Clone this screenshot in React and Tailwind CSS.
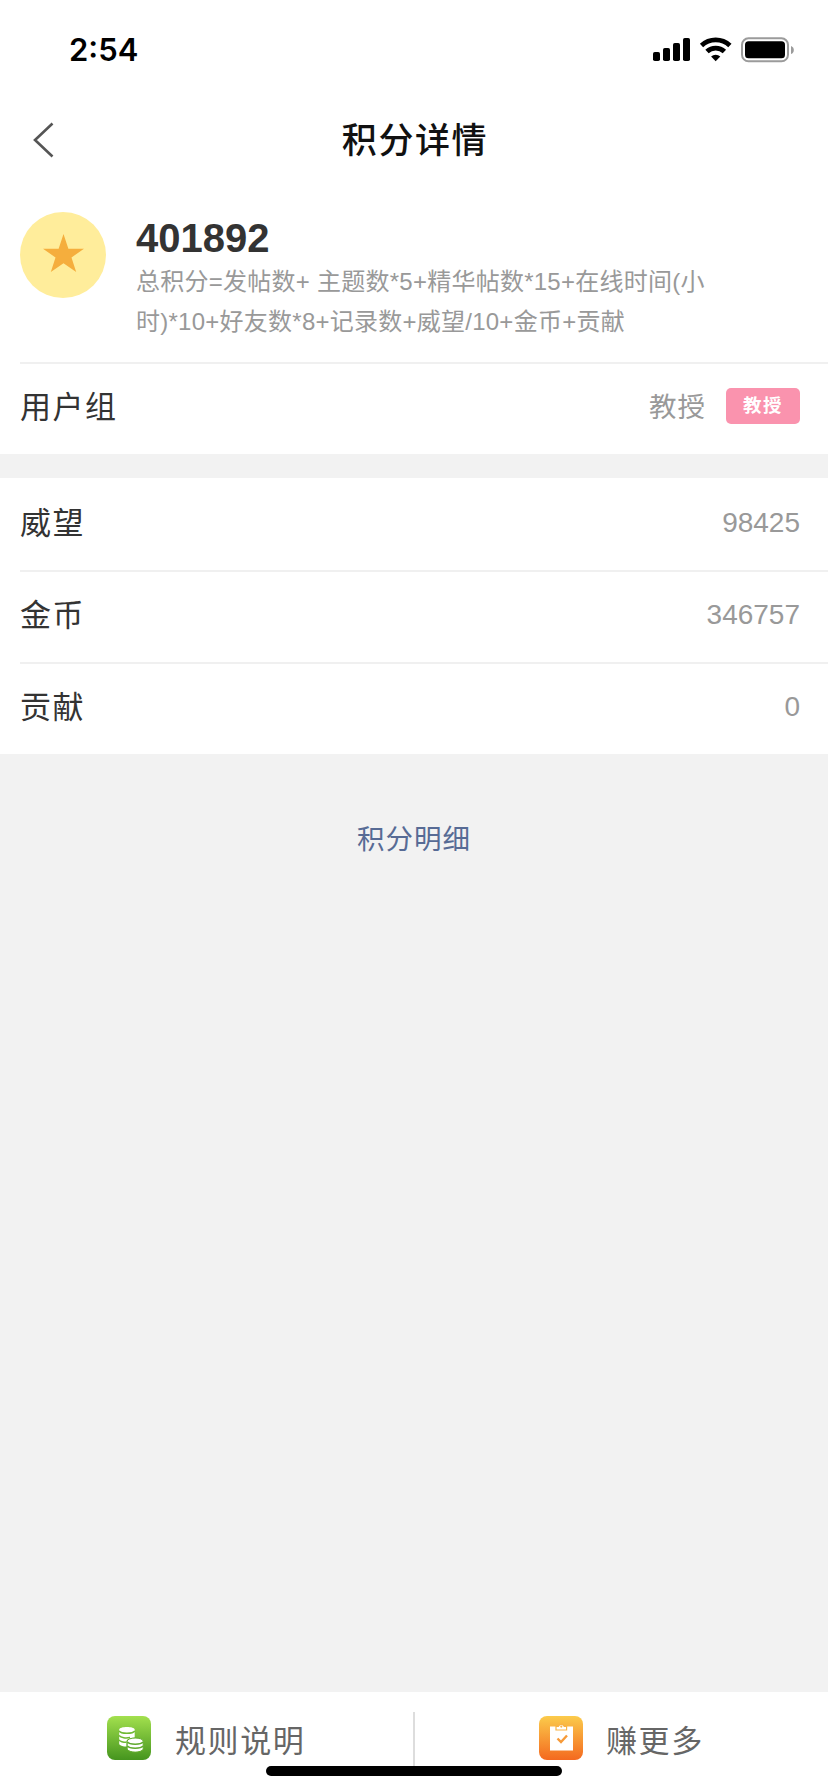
import React from "react";

const stats = [
  { label: "威望", value: "98425" },
  { label: "金币", value: "346757" },
  { label: "贡献", value: "0" },
];

const StatusBar = () => (
  <div className="flex h-[88px] items-start justify-between pt-[37px] pr-[34px] pl-[69px]">
    <span className="font-[Inter] text-[31px] leading-[26px] font-semibold text-black">
      2:54
    </span>
    <svg width="142" height="26" viewBox="0 0 142 26">
      {/* Signal */}
      <rect x="1" y="15" width="7" height="9" rx="1.8" />
      <rect x="11" y="11" width="7" height="13" rx="1.8" />
      <rect x="21" y="6" width="7" height="18" rx="1.8" />
      <rect x="31" y="1" width="7" height="23" rx="1.8" />
      {/* Wifi */}
      <g fill="none" stroke="#000" strokeWidth="4.8">
        <path d="M49.5 8.4a21 21 0 0 1 28.4 0" />
        <path d="M55 14.6a12.6 12.6 0 0 1 17.4 0" />
      </g>
      <path d="M63.7 24.3l-4.6-4.7a6.6 6.6 0 0 1 9.2 0z" />
      {/* Battery */}
      <rect
        x="90"
        y="1.3"
        width="46"
        height="23"
        rx="6.5"
        fill="none"
        stroke="#9b9b9b"
        strokeWidth="2"
      />
      <rect x="93" y="4.3" width="40" height="17" rx="3.5" />
      <path d="M139 9q2.8 1 2.8 4t-2.8 4z" fill="#9b9b9b" />
    </svg>
  </div>
);

const CoinsIcon = () => (
  <svg className="size-11" viewBox="0 0 44 44">
    <defs>
      <linearGradient id="green" x1="0" y1="0" x2="0" y2="1">
        <stop offset="0" stopColor="#a3e04e" />
        <stop offset="1" stopColor="#45951e" />
      </linearGradient>
    </defs>
    <rect width="44" height="44" rx="8" fill="url(#green)" />
    <path
      d="M12.2 13.5c0-3.5 15.500-3.500 15.500 0v8c-4.500.3-8 1.600-8.200 3.800v5.200c-3.200 0-6-.8-7.300-2.300z"
      fill="#fff"
    />
    <g fill="none" stroke="#6fb933" strokeWidth="1.4">
      <path d="M12 15c2 3 13.800 3 15.800 0" />
      <path d="M12 19.5c2 2.400 7 3 11 2" />
      <path d="M12 24c1.600 1.800 4.600 2.300 7.400 2.300" />
    </g>
    <path
      d="M20.2 25.200c0-4.200 16-4.200 16 0v7.900c-1.500 4-14.500 4-16 0z"
      fill="#fff"
      stroke="#62ad2d"
      strokeWidth="1"
    />
    <g fill="none" stroke="#5fa92c" strokeWidth="1.4">
      <path d="M20.4 26c2 2.900 13.600 2.900 15.600 0" />
      <path d="M20.4 30c2 2.900 13.600 2.900 15.600 0" />
    </g>
  </svg>
);

const TaskIcon = () => (
  <svg className="size-11" viewBox="0 0 44 44">
    <defs>
      <linearGradient id="orange" x1="0" y1="0" x2="0" y2="1">
        <stop offset="0" stopColor="#fbcb4b" />
        <stop offset="1" stopColor="#f4691f" />
      </linearGradient>
    </defs>
    <rect width="44" height="44" rx="8" fill="url(#orange)" />
    <rect x="11" y="10.5" width="23" height="24" fill="#fff" />
    <path
      d="M17 10.5h2.300a3.200 3.200 0 0 1 6 0h2.300v3.500H17z"
      fill="#fff"
      stroke="#f9b344"
      strokeWidth="1.2"
    />
    <circle cx="22.3" cy="10.6" r="1.1" fill="#f9b344" />
    <path
      d="M18.5 22.500l3.500 3.500 6-6.500"
      fill="none"
      stroke="#f79a38"
      strokeWidth="2.4"
    />
  </svg>
);

const App = () => {
  return (
    <div className="relative flex h-[1792px] w-[828px] flex-col bg-[#f2f2f2] font-['Liberation_Sans','Noto_Sans_CJK_SC',sans-serif] text-[#333]">
      <header className="bg-white">
        <StatusBar />
        <div className="grid h-[104px] grid-cols-[1fr_auto_1fr] items-center pl-8">
          <svg width="24" height="40" viewBox="0 0 24 40" fill="none">
            <path d="M20.5 3.500L3 20l17.500 16.500" stroke="#555" strokeWidth="2.6" />
          </svg>
          <h1 className="pt-px pr-[30px] text-[35px] leading-[52px] font-medium tracking-[1.6px] text-[#111]">
            积分详情
          </h1>
        </div>
      </header>

      {/* Total */}
      <section className="bg-white pl-5">
        <div className="flex h-[172px] border-b-2 border-[#f0f0f0] pt-5">
          <div className="flex size-[86px] shrink-0 items-center justify-center rounded-full bg-[#ffed9b] pb-1">
            <svg width="41" height="39" viewBox="0 0 42 40">
              <path
                d="M21 0l5 15h16L29.2 24.100 34 39 21 29.900 8 39l4.800-14.900L0 15h16z"
                fill="#f5ae3d"
              />
            </svg>
          </div>
          <div className="ml-[30px] pt-[3px]">
            <div className="text-[40px] leading-[46px] font-bold">401892</div>
            <p className="pt-px text-[24px] leading-10 tracking-[0.25px] whitespace-nowrap text-[#999]">
              总积分=发帖数+ 主题数*5+精华帖数*15+在线时间(小
              <br />
              时)*10+好友数*8+记录数+威望/10+金币+贡献
            </p>
          </div>
        </div>
        <div className="flex h-[90px] items-center justify-between pr-7 pb-[6px]">
          <span className="pt-1 text-[31px] tracking-[1.5px]">用户组</span>
          <div className="flex items-center gap-5">
            <span className="pt-[3px] text-[27.5px] tracking-[1px] text-[#999]">教授</span>
            <span className="flex h-9 w-[74px] items-center justify-center rounded-[5px] bg-[#fa93ae] text-[18.5px] font-bold tracking-[1.5px] text-white">
              教授
            </span>
          </div>
        </div>
      </section>

      {/* Stats */}
      <section className="mt-6 bg-white pl-5">
        {stats.map((s) => (
          <div
            key={s.label}
            className="flex h-[92px] items-center justify-between border-t-2 border-[#f0f0f0] pr-7 first:border-transparent"
          >
            <span className="pb-0.5 text-[31px] tracking-[1.5px]">{s.label}</span>
            <span className="pb-1 text-[28px] text-[#999]">{s.value}</span>
          </div>
        ))}
      </section>

      <a className="mt-16 self-center text-[27.5px] leading-[44px] tracking-[1px] text-[#576b95]">
        积分明细
      </a>

      {/* Bottom actions */}
      <footer className="mt-auto flex h-[100px] bg-white pt-5 text-[#666]">
        <div className="flex h-[52px] w-[413px] items-center gap-6 pl-[107px]">
          <CoinsIcon />
          <span className="pt-2 text-[31px] tracking-[1.6px]">规则说明</span>
        </div>
        <div className="flex h-[60px] flex-1 border-l-2 border-[#ddd] pl-[124px]">
          <div className="flex h-[52px] items-center gap-[23px]">
            <TaskIcon />
            <span className="pt-2 text-[31px] tracking-[1.6px]">赚更多</span>
          </div>
        </div>
      </footer>
      <div className="absolute bottom-4 left-[266px] h-[10px] w-[296px] rounded-full bg-black" />
    </div>
  );
};

export default App;
